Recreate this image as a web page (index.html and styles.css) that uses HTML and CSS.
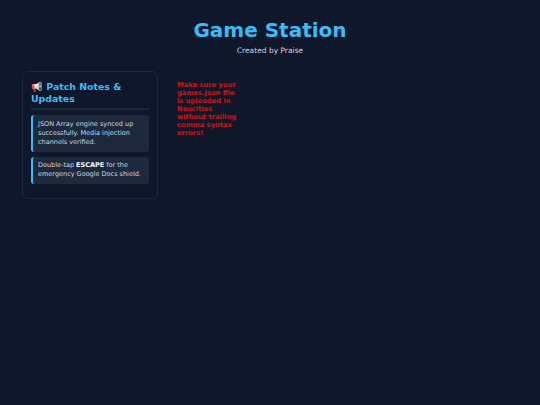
FILE: index.html
```html
<!DOCTYPE html>
<html lang="en">
<head>
    <meta charset="UTF-8">
    <meta name="viewport" content="width=device-width, initial-scale=1.0">
    <title>Game Station</title>
    <link rel="stylesheet" href="styles.css">
</head>
<body>
    <header class="site-header">
        <h1>Game Station</h1>
        <p class="subtitle">Created by Praise</p>
    </header>

    <main class="layout">
        <aside class="patch-card">
            <h2>📢 Patch Notes &amp; Updates</h2>
            <div class="note">JSON Array engine synced up successfully. Media injection channels verified.</div>
            <div class="note">Double-tap <strong>ESCAPE</strong> for the emergency Google Docs shield.</div>
        </aside>

        <div class="game-grid">
            <p class="load-error">Make sure your games.json file is uploaded in Neocities without trailing comma syntax errors!</p>
        </div>
    </main>
</body>
</html>
```

FILE: styles.css
```css
* {
    margin: 0;
    padding: 0;
    box-sizing: border-box;
}

body {
    font-family: "DejaVu Sans", Verdana, sans-serif;
    background: #0f172a;
    color: #e2e8f0;
    min-height: 100vh;
}

.site-header {
    padding-top: 17px;
    text-align: center;
}

h1 {
    color: #38bdf8;
    font-size: 20px;
    line-height: 26px;
    font-weight: 700;
}

.subtitle {
    margin-top: 3px;
    color: #cbd5e1;
    font-size: 7.5px;
    line-height: 9px;
}

.layout {
    display: flex;
    align-items: flex-start;
    gap: 19px;
    padding: 16px 22px;
}

.patch-card {
    width: 136px;
    flex-shrink: 0;
    padding: 9px 8px 14px;
    background: #0f172a;
    border: 1px solid #1e293b;
    border-radius: 6px;
}

h2 {
    color: #38bdf8;
    font-size: 9.4px;
    line-height: 12px;
    font-weight: 700;
    padding-bottom: 3px;
    margin-bottom: 5px;
    border-bottom: 2px solid #1e293b;
}

.note {
    margin-bottom: 5px;
    padding: 4.5px 5px;
    background: #1e293b;
    border-left: 2px solid #38bdf8;
    border-radius: 3px;
    color: #cbd5e1;
    font-size: 6.5px;
    line-height: 9.2px;
}

.note:last-child {
    margin-bottom: 0;
}

.note strong {
    color: #f8fafc;
}

.game-grid {
    width: 62px;
    padding-top: 10px;
}

.load-error {
    color: #d01414;
    font-size: 6.75px;
    line-height: 8px;
    font-weight: 700;
}
```
